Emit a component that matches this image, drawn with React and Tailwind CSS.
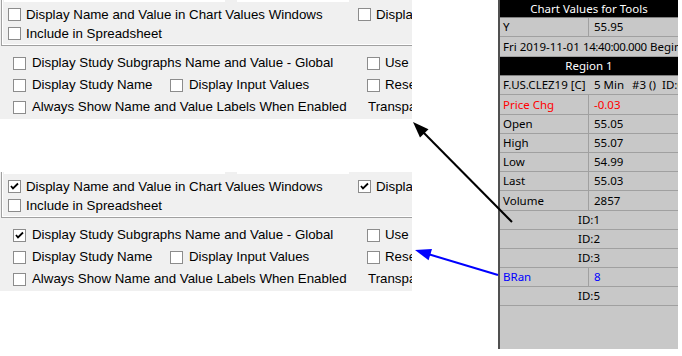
import React from 'react';

function Box({ checked }) {
  return (
    <span className="relative inline-block w-[13px] h-[13px] shrink-0 bg-white border border-[#8c8c8c]">
      {checked && (
        <svg viewBox="0 0 11 11" className="absolute inset-0 w-[11px] h-[11px]">
          <path d="M2 5 L4 7.5 L9 2.5" fill="none" stroke="#000" strokeWidth="1.8" />
        </svg>
      )}
    </span>
  );
}

function Check({ checked, label, gap = 'gap-[5px]', className = '' }) {
  return (
    <div className={`flex items-center shrink-0 ${gap} whitespace-nowrap ${className}`}>
      <Box checked={checked} />
      <span>{label}</span>
    </div>
  );
}

function Panel({ checked }) {
  return (
    <div className="relative h-[119px] w-[412px] bg-[#f0f0f0] overflow-hidden text-[13.3px] text-black">
      <div className="absolute top-0 left-0 flex h-[2px] w-full">
        <div className="ml-[4px] w-[221px] bg-white" />
        <div className="ml-[12px] w-[112px] bg-white" />
      </div>
      <div className="ml-[1px] w-[411px] h-[46px] border-l border-b border-[#a0a0a0]">
        <div className="h-full border-l border-b border-white pt-[5px] pl-[5px]">
          <div className="flex h-[19px] items-center">
            <Check checked={checked} label="Display Name and Value in Chart Values Windows" className="w-[350px]" />
            <Check checked={checked} label="Display" />
          </div>
          <div className="flex h-[19px] items-center">
            <Check label="Include in Spreadsheet" />
          </div>
        </div>
      </div>
      <div className="pt-[6px] pl-[13px]">
        <div className="flex h-[22px] items-center">
          <Check checked={checked} gap="gap-[6px]" label="Display Study Subgraphs Name and Value - Global" className="w-[354px]" />
          <Check gap="gap-[5px]" label="Use" />
        </div>
        <div className="flex h-[22px] items-center">
          <Check gap="gap-[6px]" label="Display Study Name" className="w-[157px]" />
          <Check gap="gap-[6px]" label="Display Input Values" className="w-[197px]" />
          <Check gap="gap-[5px]" label="Reset" />
        </div>
        <div className="flex h-[22px] items-center">
          <Check gap="gap-[6px]" label="Always Show Name and Value Labels When Enabled" className="w-[355px]" />
          <span className="shrink-0 whitespace-nowrap">Transparency</span>
        </div>
      </div>
    </div>
  );
}

const rows = [
  { kind: 'head', text: 'Chart Values for Tools', h: 'h-[18px]' },
  { kind: 'pair', label: 'Y', value: '55.95', h: 'h-[19px]' },
  { kind: 'date', h: 'h-[20px]' },
  { kind: 'head', text: 'Region 1', h: 'h-[19px]' },
  { kind: 'symbol', h: 'h-[19px]' },
  { kind: 'pair', label: 'Price Chg', value: '-0.03', color: 'text-[#ff0000]', h: 'h-[20px]' },
  { kind: 'pair', label: 'Open', value: '55.05', h: 'h-[19px]' },
  { kind: 'pair', label: 'High', value: '55.07', h: 'h-[19px]' },
  { kind: 'pair', label: 'Low', value: '54.99', h: 'h-[19px]' },
  { kind: 'pair', label: 'Last', value: '55.03', h: 'h-[19px]' },
  { kind: 'pair', label: 'Volume', value: '2857', h: 'h-[20px]' },
  { kind: 'id', text: 'ID:1', h: 'h-[19px]' },
  { kind: 'id', text: 'ID:2', h: 'h-[19px]' },
  { kind: 'id', text: 'ID:3', h: 'h-[19px]' },
  { kind: 'pair', label: 'BRan', value: '8', color: 'text-[#0000ff]', h: 'h-[19px]' },
  { kind: 'id', text: 'ID:5', h: 'h-[19px]' },
];

function ChartValues() {
  return (
    <div className="w-[180px] h-[349px] bg-[#c8c8c8] border-l-2 border-[#505050] overflow-hidden text-[11.5px] text-black" style={{ fontFamily: '"Noto Sans", sans-serif' }}>
      {rows.map((r, i) => {
        if (r.kind === 'head') {
          return (
            <div key={i} className={`${r.h} bg-black text-white flex items-center justify-center border-b border-[#808080]`}>
              {r.text}
            </div>
          );
        }
        if (r.kind === 'date') {
          return (
            <div key={i} className={`${r.h} flex items-center pl-[3px] whitespace-nowrap border-b border-[#a0a0a0]`}>
              <span className="w-[80px] shrink-0">Fri 2019-11-01</span>
              <span className="w-[67px] shrink-0 tracking-[-0.4px]">14:40:00.000</span>
              <span className="shrink-0">Begin</span>
            </div>
          );
        }
        if (r.kind === 'symbol') {
          return (
            <div key={i} className={`${r.h} flex items-center pl-[3px] whitespace-nowrap border-b border-[#a0a0a0]`}>
              <span className="w-[91px] shrink-0">F.US.CLEZ19 [C]</span>
              <span className="w-[38px] shrink-0">5 Min</span>
              <span className="w-[30px] shrink-0">#3 ()</span>
              <span className="shrink-0">ID:0</span>
            </div>
          );
        }
        if (r.kind === 'id') {
          return (
            <div key={i} className={`${r.h} flex items-center justify-center border-b border-[#a0a0a0]`}>
              {r.text}
            </div>
          );
        }
        return (
          <div key={i} className={`${r.h} flex border-b border-[#a0a0a0] ${r.color || ''}`}>
            <div className="w-[89px] pl-[3px] flex items-center border-r border-[#a0a0a0]">{r.label}</div>
            <div className="pl-[5px] flex items-center">{r.value}</div>
          </div>
        );
      })}
    </div>
  );
}

export default function App() {
  return (
    <div className="relative w-[682px] h-[356px] bg-white overflow-hidden flex" style={{ fontFamily: '"Liberation Sans", Arial, sans-serif' }}>
      <div className="w-[412px] flex flex-col">
        <Panel checked={false} />
        <div className="h-[53px]" />
        <Panel checked />
      </div>
      <div className="w-[86px]" />
      <ChartValues />
      <svg className="absolute inset-0 pointer-events-none" width="682" height="356">
        <line x1="512" y1="222" x2="422" y2="131" stroke="#000" strokeWidth="2" />
        <polygon points="413,122 428.5,129.2 420,137.6" fill="#000" />
        <line x1="498" y1="275" x2="428" y2="254" stroke="#0000ff" strokeWidth="2" />
        <polygon points="415,250 432,248.9 428.6,260.3" fill="#0000ff" />
      </svg>
    </div>
  );
}
